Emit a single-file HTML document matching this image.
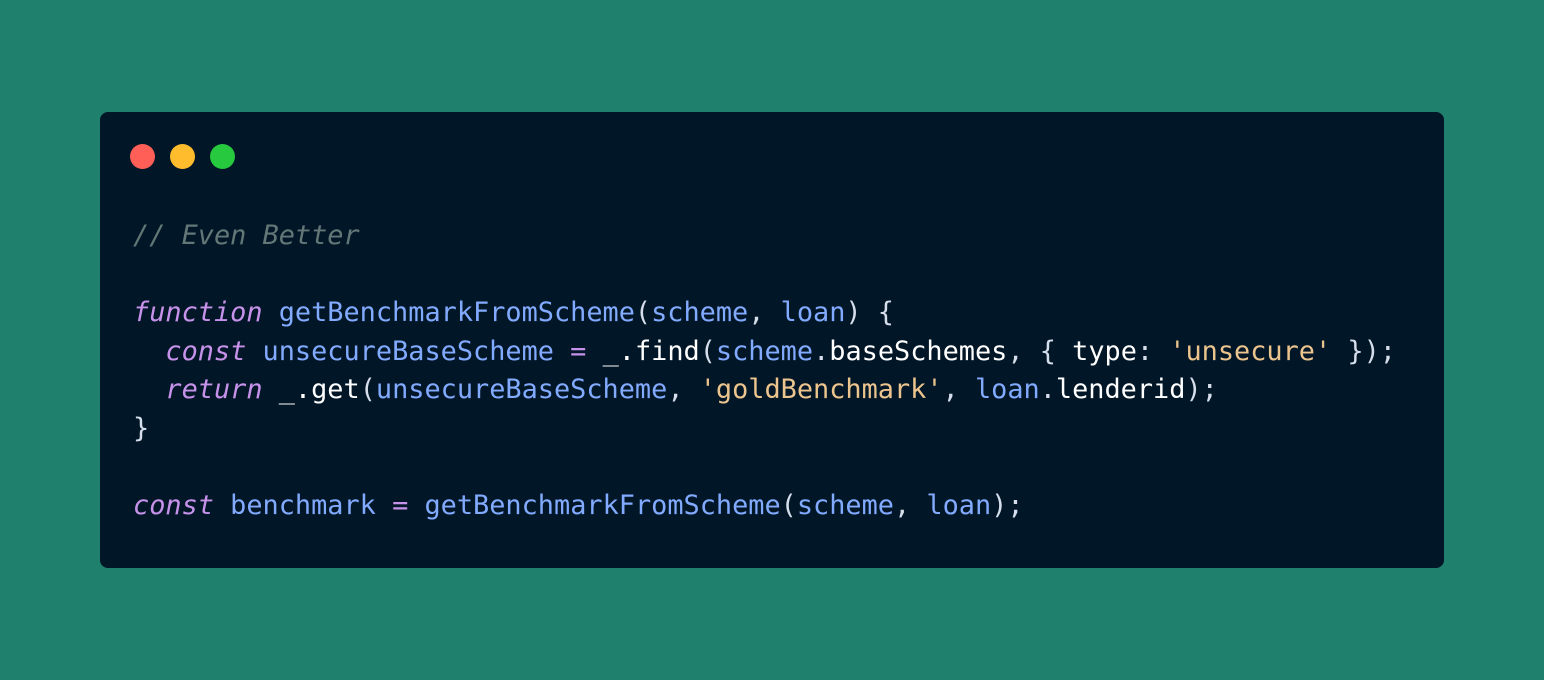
<!DOCTYPE html>
<html><head><meta charset="utf-8"><style>
html,body{margin:0;padding:0}
body{width:1544px;height:680px;background:#20806e;position:relative;overflow:hidden}
.win{position:absolute;left:100px;top:112px;width:1344px;height:456px;background:#011627;border-radius:8px}
.dot{position:absolute;top:144px;width:25px;height:25px;border-radius:50%}
pre{position:absolute;left:133px;top:217px;margin:0;font-family:"DejaVu Sans Mono","Liberation Mono",monospace;font-size:26.9px;line-height:38.6px;color:#d6deeb}
.c{color:#637777;font-style:italic}.k{color:#c792ea;font-style:italic}.f{color:#82aaff}.s{color:#ecc48d}.o{color:#c792ea}.w{color:#ffffff}
</style></head><body>
<div class="win"></div>
<div class="dot" style="left:130px;background:#ff5f56"></div>
<div class="dot" style="left:170px;background:#ffbd2e"></div>
<div class="dot" style="left:210px;background:#27c93f"></div>
<pre><span class="c">// Even Better</span>

<span class="k">function</span> <span class="f">getBenchmarkFromScheme</span>(<span class="f">scheme</span>, <span class="f">loan</span>) {
  <span class="k">const</span> <span class="f">unsecureBaseScheme</span> <span class="o">=</span> <span class="w">_.find</span>(<span class="f">scheme</span>.<span class="w">baseSchemes</span>, { <span class="w">type</span>: <span class="s">'unsecure'</span> });
  <span class="k">return</span> <span class="w">_.get</span>(<span class="f">unsecureBaseScheme</span>, <span class="s">'goldBenchmark'</span>, <span class="f">loan</span>.<span class="w">lenderid</span>);
}

<span class="k">const</span> <span class="f">benchmark</span> <span class="o">=</span> <span class="f">getBenchmarkFromScheme</span>(<span class="f">scheme</span>, <span class="f">loan</span>);</pre>
</body></html>
